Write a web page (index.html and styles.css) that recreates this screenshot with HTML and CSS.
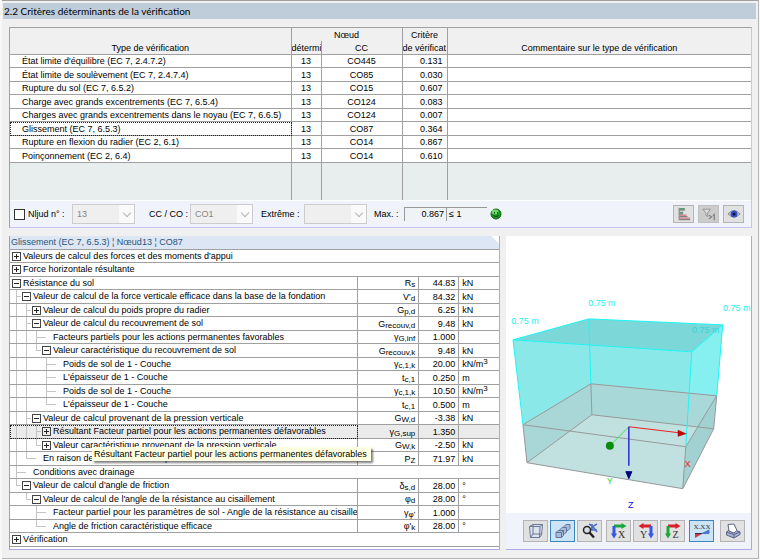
FILE: index.html
```html
<!DOCTYPE html>
<html lang="fr">
<head>
    <meta charset="utf-8">
    <title>2.2 Critères déterminants de la vérification</title>
    <link rel="stylesheet" href="styles.css">
</head>
<body>
<div class="window">
    <h1 class="title">2.2 Critères déterminants de la vérification</h1>

    <div class="content">
        <!-- Results table -->
        <section class="results">
            <table class="results-table">
                <colgroup>
                    <col class="col-type"><col class="col-node"><col class="col-cc"><col class="col-ratio"><col>
                </colgroup>
                <thead>
                    <tr>
                        <th></th>
                        <th colspan="2">Nœud</th>
                        <th>Critère</th>
                        <th></th>
                    </tr>
                    <tr>
                        <th>Type de vérification</th>
                        <th class="cut">détermi</th>
                        <th>CC</th>
                        <th class="cut">de vérificat</th>
                        <th>Commentaire sur le type de vérification</th>
                    </tr>
                </thead>
                <tbody>
                    <tr><td>État limite d'équilibre (EC 7, 2.4.7.2)</td><td>13</td><td>CO445</td><td>0.131</td><td></td></tr>
                    <tr><td>État limite de soulèvement (EC 7, 2.4.7.4)</td><td>13</td><td>CO85</td><td>0.030</td><td></td></tr>
                    <tr><td>Rupture du sol (EC 7, 6.5.2)</td><td>13</td><td>CO15</td><td>0.607</td><td></td></tr>
                    <tr><td>Charge avec grands excentrements (EC 7, 6.5.4)</td><td>13</td><td>CO124</td><td>0.083</td><td></td></tr>
                    <tr><td>Charges avec grands excentrements dans le noyau (EC 7, 6.6.5)</td><td>13</td><td>CO124</td><td>0.007</td><td></td></tr>
                    <tr><td class="focus">Glissement (EC 7, 6.5.3)</td><td>13</td><td>CO87</td><td>0.364</td><td></td></tr>
                    <tr><td>Rupture en flexion du radier (EC 2, 6.1)</td><td>13</td><td>CO14</td><td>0.867</td><td></td></tr>
                    <tr><td>Poinçonnement (EC 2, 6.4)</td><td>13</td><td>CO14</td><td>0.610</td><td></td></tr>
                    <tr class="empty"><td></td><td></td><td></td><td></td><td></td></tr>
                </tbody>
            </table>

            <form class="filters">
                <input type="checkbox" id="node-filter">
                <label class="label-node" for="node-filter">Nljud n° :</label>
                <span class="combo"><select aria-label="Nœud" disabled><option>13</option></select></span>
                <label class="label-cc" for="cc">CC / CO :</label>
                <span class="combo"><select id="cc" disabled><option>CO1</option></select></span>
                <label class="label-extreme" for="extreme">Extrême :</label>
                <span class="combo"><select id="extreme" disabled><option></option></select></span>
                <label class="label-max" for="max">Max. :</label>
                <output class="max" id="max">0.867</output>
                <span class="limit">≤ 1</span>
                <svg class="smiley" viewBox="0 0 12 12">
                    <circle cx="6" cy="6" r="5" fill="#18941c" stroke="#0c6a10"/>
                    <ellipse cx="5" cy="4" rx="3.5" ry="2.4" fill="#6fd86a"/>
                    <path d="M4.500 4v1.500M7.500 4v1.500M3.500 7.500q2.500 2.500 5 0" fill="none" stroke="#05400a"/>
                </svg>
                <span class="filter-buttons">
                    <button type="button" aria-label="Diagramme">
                        <svg viewBox="0 0 16 16">
                            <path d="M2.500 1v14" stroke="#666"/>
                            <path d="M3 2h6M3 6.500h4" stroke="#5d9c78" stroke-width="2"/>
                            <path d="M3 9.500h8M3 13h12" stroke="#d88c98" stroke-width="2"/>
                            <path d="M3 3.500h6M3 8h4M3 11h9M3 14.500h12" stroke="#666"/>
                        </svg>
                    </button>
                    <button type="button" class="pressed" aria-label="Filtre &gt; 1">
                        <svg viewBox="0 0 16 16">
                            <path d="M1 2.500h8.500L6.500 7v4L4.500 9.500V7z" fill="#ddd" stroke="#8b8b8b"/>
                            <path d="M8 9.500l3 2-3 2M12.500 10l1.500-1.500V15" fill="none" stroke="#808080" stroke-width="1.400"/>
                        </svg>
                    </button>
                    <button type="button" aria-label="Afficher">
                        <svg viewBox="0 0 16 16">
                            <path d="M1 8Q8 0 15 8 8 15 1 8z" fill="#c4cae0" stroke="#888"/>
                            <circle cx="8" cy="8" r="4" fill="#3453c4"/>
                            <circle cx="8" cy="8" r="1.800" fill="#0a1240"/>
                        </svg>
                    </button>
                </span>
            </form>
        </section>

        <div class="lower">
            <!-- Details tree -->
            <section class="details">
                <h2 class="details-title">Glissement (EC 7, 6.5.3) ¦ Nœud13 ¦ CO87</h2>
                <table class="tree">
                    <colgroup>
                        <col><col class="col-symbol"><col class="col-value"><col class="col-unit">
                    </colgroup>
                    <tbody>
                        <tr><td colspan="4"><div class="node"><i class="box plus"></i><span>Valeurs de calcul des forces et des moments d'appui</span></div></td></tr>
                        <tr><td colspan="4"><div class="node"><i class="box plus"></i><span>Force horizontale résultante</span></div></td></tr>
                        <tr><td><div class="node"><i class="box"></i><span>Résistance du sol</span></div></td><td>R<sub>s</sub></td><td>44.83</td><td>kN</td></tr>
                        <tr><td><div class="node"><i class="tee"></i><i class="box"></i><span>Valeur de calcul de la force verticale efficace dans la base de la fondation</span></div></td><td>V'<sub>d</sub></td><td>84.32</td><td>kN</td></tr>
                        <tr><td><div class="node"><i class="bar"></i><i class="tee"></i><i class="box plus"></i><span>Valeur de calcul du poids propre du radier</span></div></td><td>G<sub>p,d</sub></td><td>6.25</td><td>kN</td></tr>
                        <tr><td><div class="node"><i class="bar"></i><i class="tee"></i><i class="box"></i><span>Valeur de calcul du recouvrement de sol</span></div></td><td>G<sub>recouv,d</sub></td><td>9.48</td><td>kN</td></tr>
                        <tr><td><div class="node"><i class="bar"></i><i class="bar"></i><i class="tee"></i><i class="leaf"></i><span>Facteurs partiels pour les actions permanentes favorables</span></div></td><td>γ<sub>G,inf</sub></td><td>1.000</td><td></td></tr>
                        <tr><td><div class="node"><i class="bar"></i><i class="bar"></i><i class="end"></i><i class="box"></i><span>Valeur caractéristique du recouvrement de sol</span></div></td><td>G<sub>recouv,k</sub></td><td>9.48</td><td>kN</td></tr>
                        <tr><td><div class="node"><i class="bar"></i><i class="bar"></i><i></i><i class="tee"></i><i class="leaf"></i><span>Poids de sol de 1 - Couche</span></div></td><td>γ<sub>c,1,k</sub></td><td>20.00</td><td>kN/m<sup>3</sup></td></tr>
                        <tr><td><div class="node"><i class="bar"></i><i class="bar"></i><i></i><i class="tee"></i><i class="leaf"></i><span>L'épaisseur de 1 - Couche</span></div></td><td>t<sub>c,1</sub></td><td>0.250</td><td>m</td></tr>
                        <tr><td><div class="node"><i class="bar"></i><i class="bar"></i><i></i><i class="tee"></i><i class="leaf"></i><span>Poids de sol de 1 - Couche</span></div></td><td>γ<sub>c,1,k</sub></td><td>10.50</td><td>kN/m<sup>3</sup></td></tr>
                        <tr><td><div class="node"><i class="bar"></i><i class="bar"></i><i></i><i class="end"></i><i class="leaf"></i><span>L'épaisseur de 1 - Couche</span></div></td><td>t<sub>c,1</sub></td><td>0.500</td><td>m</td></tr>
                        <tr><td><div class="node"><i class="bar"></i><i class="tee"></i><i class="box"></i><span>Valeur de calcul provenant de la pression verticale</span></div></td><td>G<sub>W,d</sub></td><td>-3.38</td><td>kN</td></tr>
                        <tr class="selected"><td class="focus"><div class="node"><i class="bar"></i><i class="bar"></i><i class="tee"></i><i class="box plus"></i><span>Résultant Facteur partiel pour les actions permanentes défavorables</span><div class="tooltip">Résultant Facteur partiel pour les actions permanentes défavorables</div></div></td><td>γ<sub>G,sup</sub></td><td>1.350</td><td></td></tr>
                        <tr><td><div class="node"><i class="bar"></i><i class="bar"></i><i class="end"></i><i class="box plus"></i><span>Valeur caractéristique provenant de la pression verticale</span></div></td><td>G<sub>W,k</sub></td><td>-2.50</td><td>kN</td></tr>
                        <tr><td><div class="node"><i class="bar"></i><i class="end"></i><i class="leaf"></i><span>En raison de l'effort normal du poteau</span></div></td><td>P<sub>Z</sub></td><td>71.97</td><td>kN</td></tr>
                        <tr><td colspan="4"><div class="node"><i class="tee"></i><i class="leaf"></i><span>Conditions avec drainage</span></div></td></tr>
                        <tr><td><div class="node"><i class="end"></i><i class="box"></i><span>Valeur de calcul d'angle de friction</span></div></td><td>δ<sub>s,d</sub></td><td>28.00</td><td>°</td></tr>
                        <tr><td><div class="node"><i></i><i class="end"></i><i class="box"></i><span>Valeur de calcul de l'angle de la résistance au cisaillement</span></div></td><td>φ<sub>d</sub></td><td>28.00</td><td>°</td></tr>
                        <tr><td><div class="node"><i></i><i></i><i class="tee"></i><i class="leaf"></i><span>Facteur partiel pour les paramètres de sol - Angle de la résistance au cisaillen</span></div></td><td>γ<sub>φ'</sub></td><td>1.000</td><td></td></tr>
                        <tr><td><div class="node"><i></i><i></i><i class="end"></i><i class="leaf"></i><span>Angle de friction caractéristique efficace</span></div></td><td>φ'<sub>k</sub></td><td>28.00</td><td>°</td></tr>
                        <tr><td colspan="4"><div class="node"><i class="box plus"></i><span>Vérification</span></div></td></tr>
                    </tbody>
                </table>
            </section>

            <!-- 3D view -->
            <section class="view">
                <svg class="scene" viewBox="0 0 245 277">
                    <polygon points="7,104 83,83 217,89 211,160 180,211 17,189" fill="#8ae8e8"/>
                    <polygon points="217,89 186,116 180,211 211,160" fill="#85f0ef"/>
                    <polygon points="7,104 83,83 217,89 186,116" fill="#7cd8d8"/>
                    <polygon points="17,189 180,211 177,253 21,227" fill="#bedddd"/>
                    <polygon points="17,189 85,148 211,160 180,211" fill="#a8d8d8"/>
                    <polygon points="21,227 86,179 208,193 177,253" fill="#c1e1e1"/>
                    <polygon points="17,189 85,148 86,179 21,227" fill="#a9d6d6"/>
                    <polygon points="180,211 211,160 208,193 177,253" fill="#a2d1d1"/>
                    <path d="M17 189L85 148 211 160 180 211zM21 227L86 179 208 193 177 253zM17 189L21 227M85 148L86 179M211 160L208 193M180 211L177 253" fill="none" stroke="#999"/>
                    <path d="M7 104L83 83 217 89 186 116zM7 104L17 189M83 83L85 148M217 89L211 160M186 116L180 211" fill="none" stroke="#1ef5f5"/>
                    <path d="M123 191L173 197" stroke="#f02020"/>
                    <path d="M172 194L181 198 172 201z" fill="#b80d0d"/>
                    <path d="M123 191L104 210" stroke="#40e040"/>
                    <circle cx="104" cy="210" r="4" fill="#0a8c0a"/>
                    <path d="M123 191v39" stroke="#2a2ad0" stroke-width="1.500"/>
                    <path d="M120 236h6l-3 7z" fill="#05057a" stroke="#05057a"/>
                    <g class="dims">
                        <text x="96" y="70">0.75 m</text>
                        <text x="231" y="75">0.75 m</text>
                        <text x="19" y="88">0.75 m</text>
                        <text x="200" y="97" class="dim-behind">0.75 m</text>
                        <text x="182" y="231" class="axis-x">X</text>
                        <text x="104" y="248" class="axis-y">Y</text>
                        <text x="125" y="272" class="axis-z">Z</text>
                    </g>
                </svg>
                <div class="view-tools">
                    <button type="button" aria-label="Filaire">
                        <svg viewBox="0 0 16 16">
                            <g fill="none" stroke="#6b7896">
                                <path d="M1.500 3.500L5 1.500h9.500L13.500 12l-2 2.500h-9z" fill="#dde3ee"/>
                                <path d="M1.500 3.500H12l2.500-2M12 3.500l-.5 11M5 1.500v9.500h8.500M5 11l-2.500 3.500"/>
                            </g>
                        </svg>
                    </button>
                    <button type="button" class="on" aria-label="Solide">
                        <svg viewBox="0 0 16 16">
                            <g fill="#a9bbda" stroke="#6676a0">
                                <path d="M9 3.500l2-2h4v4l-2 2H9z"/>
                                <path d="M5 6.500l2-2h4.500v4.500l-2 2H5z"/>
                                <path d="M1 9.500L3 7.500h5.500v5L6.500 14.500H1zM1 9.500h5.500v5M6.500 9.500l2-2"/>
                            </g>
                        </svg>
                    </button>
                    <button type="button" aria-label="Zoom">
                        <svg viewBox="0 0 16 16">
                            <path d="M7 1q4 2 8 8M15 1Q9 4 6 10M10 1v6h5" fill="none" stroke="#4c72c8" stroke-width="1.600"/>
                            <circle cx="5" cy="7" r="3.500" fill="#d7dde4" stroke="#222" stroke-width="1.500"/>
                            <path d="M7.500 9.500l4.500 5" stroke="#222" stroke-width="2.400"/>
                        </svg>
                    </button>
                    <button type="button" class="gap" aria-label="Vue X">
                        <svg viewBox="0 0 16 16">
                            <path d="M3 3h8" stroke="#17a83a" stroke-width="3"/><path d="M10.500 0l5 3-5 3z" fill="#17a83a"/>
                            <path d="M3 3v8" stroke="#3557e6" stroke-width="3"/><path d="M0 10.500h6l-3 5z" fill="#3557e6"/>
                            <text x="10.500" y="15">X</text>
                        </svg>
                    </button>
                    <button type="button" aria-label="Vue Y">
                        <svg viewBox="0 0 16 16">
                            <path d="M13 3H5" stroke="#d8202c" stroke-width="3"/><path d="M5.500 0l-5 3 5 3z" fill="#d8202c"/>
                            <path d="M13 3v8" stroke="#3557e6" stroke-width="3"/><path d="M10 10.500h6l-3 5z" fill="#3557e6"/>
                            <text x="5.500" y="15">Y</text>
                        </svg>
                    </button>
                    <button type="button" aria-label="Vue Z">
                        <svg viewBox="0 0 16 16">
                            <path d="M3 3h8" stroke="#d8202c" stroke-width="3"/><path d="M10.500 0l5 3-5 3z" fill="#d8202c"/>
                            <path d="M3 3v8" stroke="#17a83a" stroke-width="3"/><path d="M0 10.500h6l-3 5z" fill="#17a83a"/>
                            <text x="10.500" y="15">Z</text>
                        </svg>
                    </button>
                    <button type="button" class="on gap" aria-label="Valeurs">
                        <svg viewBox="0 0 16 16">
                            <text x="8" y="6" class="small">X.XX</text>
                            <path d="M1 10.500h14" stroke="#333"/>
                            <path d="M8 10.500h7V7z" fill="#4d74d8" stroke="#4d74d8"/>
                            <path d="M1 11h7L1 15z" fill="#c84050"/>
                        </svg>
                    </button>
                    <button type="button" class="print" aria-label="Imprimer">
                        <svg viewBox="0 0 16 16">
                            <g stroke="#5b6480">
                                <path d="M1.500 9L6 5.500l9 3.500v2.500L9 15 1.500 12z" fill="#a8b0dc"/>
                                <path d="M1.500 9L9 11.500 15 9M9 11.500V15" fill="none"/>
                                <path d="M4 8L3 1.500 9 1l3 6.500-3 2.500z" fill="#fff"/>
                            </g>
                        </svg>
                    </button>
                </div>
            </section>
        </div>
    </div>
</div>
</body>
</html>
```

FILE: styles.css
```css
* {
    box-sizing: border-box;
}
body {
    margin: 0;
    background-color: #f8f8f8;
    font-family: "Liberation Sans", Arial, sans-serif;
    font-size: 9px;
    line-height: 13px;
    color: #000;
}
.window {
    margin: 0 1px 0 2px;
    padding: 2px 2px 8px 1px;
    border-top: 1px solid #a0a0a0;
    border-right: 1px solid #b4b4b4;
    border-bottom: 1px solid #b4b4b4;
    background-color: #f0f0f0;
}
.title {
    margin: 0;
    padding: 0 1px;
    background-color: #bfcddb;
    font-family: Lato, "Open Sans", sans-serif;
    font-size: 10px;
    font-weight: normal;
    line-height: 16px;
}
.content {
    padding: 8px 4px 0 6px;
}

/* tables */
table {
    width: 100%;
    table-layout: fixed;
    border-collapse: separate;
    border-spacing: 0;
}
th, td {
    padding: 0;
    border-right: 1px solid #a0a0a0;
    border-bottom: 1px solid #a0a0a0;
    line-height: 12px;
    overflow: hidden;
    white-space: nowrap;
}
th:last-child, td:last-child {
    border-right: none;
}
.focus {
    outline: 1px dotted #222;
    outline-offset: -1px;
}

.results {
    border: 1px solid #a0a0a0;
    border-right-color: #c8c4ee;
    border-bottom-color: #c8c4ee;
    background-color: #f0f3f9;
}
.col-type {
    width: 38%;
}
.col-node {
    width: 30px;
}
.col-cc {
    width: 81px;
}
.col-ratio {
    width: 45px;
}
.results-table th {
    height: 14px;
    background-color: #f0f0f0;
    font-weight: normal;
}
.results-table thead tr:first-child th {
    border-bottom: none;
    height: 13px;
}
.results-table .cut {
    text-align: left;
}
.results-table td {
    background-color: #fff;
    text-align: center;
    height: 13px;
}
.results-table tr:nth-child(even) td {
    height: 14px;
}
.results-table td:first-child {
    padding-left: 12px;
    text-align: left;
}
.results-table td:nth-child(4) {
    padding-right: 4px;
    text-align: right;
}
.results-table .empty td {
    height: 37px;
    border-bottom: none;
    background-color: #e8eeee;
}

/* filter bar */
.filters {
    display: flex;
    align-items: center;
    height: 27px;
    padding: 0 7px 0 4px;
    border-top: 1px solid #fff;
}
.filters input {
    appearance: none;
    width: 11px;
    height: 11px;
    margin: 0 3px 0 0;
    border: 1px solid #333;
    background-color: #fff;
}
.filters input:checked {
    background-color: #333;
}
.label-node {
    width: 44px;
}
.label-cc {
    width: 41px;
    margin-left: 14px;
}
.label-extreme {
    width: 43px;
    margin-left: 8px;
}
.label-max {
    width: 30px;
    margin-left: 7px;
}
.combo {
    position: relative;
    width: 63px;
}
.combo select {
    appearance: none;
    display: block;
    width: 100%;
    height: 20px;
    padding: 0 4px;
    border: 1px solid #ccc;
    border-radius: 0;
    background: linear-gradient(to right, #efefef 75%, #fafafa 75%);
    color: #888;
    font: inherit;
    opacity: 1;
}
.combo::after {
    content: "";
    position: absolute;
    top: 6px;
    right: 5px;
    width: 5px;
    height: 5px;
    border: solid #b4b4b4;
    border-width: 0 1px 1px 0;
    transform: rotate(45deg);
}
.max, .limit {
    height: 14px;
    border-top: 1px solid #999;
    border-left: 1px solid #999;
    background-color: #f0f3f6;
}
.max {
    width: 42px;
    padding-right: 2px;
    text-align: right;
}
.limit {
    width: 41px;
    padding-left: 2px;
}
.smiley {
    width: 12px;
    height: 12px;
    margin-left: 3px;
}
.filter-buttons {
    display: flex;
    gap: 4px;
    margin-left: auto;
}
button {
    display: flex;
    align-items: center;
    justify-content: center;
    padding: 0;
    border: 1px solid #b4b4b4;
    background-color: #e1e1e1;
}
.filter-buttons button {
    width: 21px;
    height: 18px;
}
.filter-buttons svg {
    width: 14px;
    height: 14px;
}
.filter-buttons .pressed {
    background-color: #ccc;
    border-color: #c0c0c0;
}

/* lower part */
.lower {
    display: grid;
    grid-template-columns: 2fr 1fr;
    gap: 6px;
    margin-top: 8px;
}
.details {
    border-right: 1px solid #aaa8e6;
    border-bottom: 1px solid #aaa8e6;
    border-left: 1px solid #a0a0a0;
    background-color: #fff;
}
.details-title {
    margin: 0;
    padding: 0 1px;
    border-bottom: 1px solid #a0a0a0;
    background-color: #dce6f4;
    color: #2a5578;
    font-size: 9px;
    font-weight: normal;
    line-height: 13px;
    clip-path: polygon(0 0, calc(100% - 8px) 0, 100% 8px, 100% 100%, 0 100%);
}
.col-symbol {
    width: 61px;
}
.col-value {
    width: 40px;
}
.col-unit {
    width: 40px;
}
.tree td:nth-child(2), .tree td:nth-child(3) {
    padding-right: 3px;
    text-align: right;
}
.tree td:nth-child(4) {
    padding-left: 3px;
}
.tree sub, .tree sup {
    font-size: 8px;
    line-height: 0;
}
.tree sub {
    vertical-align: -1px;
}
.tree sup {
    vertical-align: 3px;
}
.node {
    display: flex;
    height: 12px;
    padding-left: 1px;
}
.tree tr:nth-child(even) .node {
    height: 13px;
}
.node span {
    padding-left: 2px;
}
.node i {
    flex: none;
    width: 10px;
}
.bar {
    background: linear-gradient(#c4c4c4, #c4c4c4) 5px 0 / 1px 100% no-repeat;
}
.tee {
    background:
        linear-gradient(#c4c4c4, #c4c4c4) 5px 0 / 1px 100% no-repeat,
        linear-gradient(#c4c4c4, #c4c4c4) 5px 6px / 5px 1px no-repeat;
}
.end {
    background:
        linear-gradient(#c4c4c4, #c4c4c4) 5px 0 / 1px 6px no-repeat,
        linear-gradient(#c4c4c4, #c4c4c4) 5px 6px / 5px 1px no-repeat;
}
.leaf {
    background: linear-gradient(#c4c4c4, #c4c4c4) 0 6px / 5px 1px no-repeat;
}
.node .box {
    width: 9px;
    height: 9px;
    margin: 2px 0 0 1px;
    border: 1px solid #444;
    background: linear-gradient(#222, #222) center / 5px 1px no-repeat;
}
.node .plus {
    background:
        linear-gradient(#222, #222) center / 5px 1px no-repeat,
        linear-gradient(#222, #222) center / 1px 5px no-repeat;
}
.selected td {
    background-color: #ebebeb;
}
.selected td:first-child {
    overflow: visible;
}
.selected .node {
    position: relative;
}
.tooltip {
    position: absolute;
    top: 22px;
    left: 82px;
    z-index: 1;
    padding: 1px 4px 1px 2px;
    background-color: #ffffe1;
    box-shadow: 2px 2px 2px rgba(0, 0, 0, 0.5);
}

/* 3D view */
.view {
    display: flex;
    flex-direction: column;
    border-right: 1px solid #aaa8e6;
    border-bottom: 1px solid #aaa8e6;
    background-color: #fff;
}
.scene {
    flex: 1;
    width: 100%;
    min-height: 0;
}
.dims {
    fill: #1ef0f0;
    font-size: 9px;
    text-anchor: middle;
}
.dim-behind {
    fill: #35d5d5;
}
.axis-x {
    fill: #f02020;
}
.axis-y {
    fill: #20e020;
}
.axis-z {
    fill: #1010e0;
}
.view-tools {
    display: flex;
    justify-content: flex-end;
    gap: 2px;
    padding: 7px 6px;
    background-color: #f0f3f9;
}
.view-tools button {
    width: 25px;
    height: 22px;
}
.view-tools .gap {
    margin-left: 2px;
}
.view-tools .print {
    margin-left: 4px;
}
.view-tools .on {
    border-color: #3c86bd;
    background-color: #cce4f7;
}
.view-tools svg {
    width: 16px;
    height: 16px;
}
.view-tools text {
    fill: #333;
    font-family: "Liberation Serif", serif;
    font-size: 10px;
    text-anchor: middle;
}
.view-tools .small {
    font-size: 7px;
}
```
